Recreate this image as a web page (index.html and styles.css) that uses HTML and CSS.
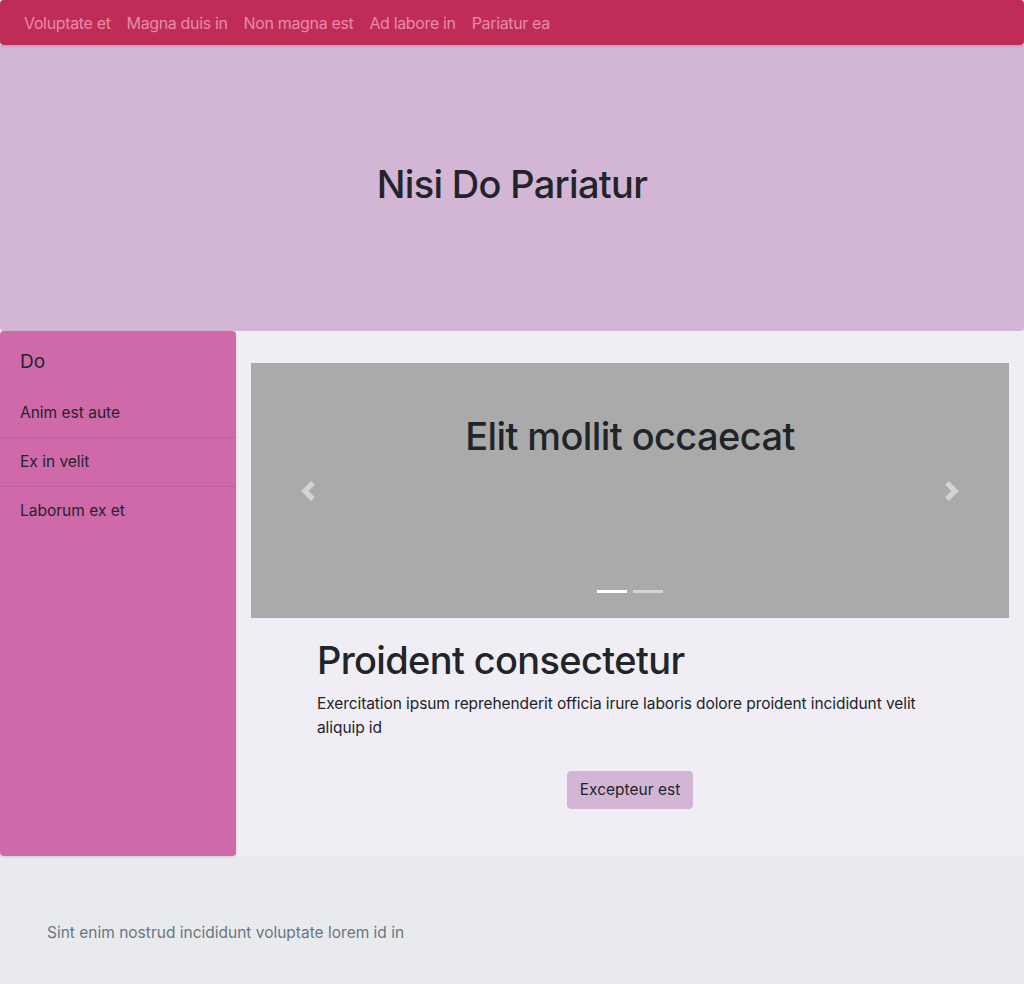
FILE: index.html
```html
<!DOCTYPE html>
<html lang="en">
<head>
<meta charset="utf-8">
<title>Nisi Do Pariatur</title>
<link rel="stylesheet" href="styles.css">
</head>
<body>
<nav class="navbar">
  <a class="nav-link" href="#">Voluptate et</a>
  <a class="nav-link" href="#">Magna duis in</a>
  <a class="nav-link" href="#">Non magna est</a>
  <a class="nav-link" href="#">Ad labore in</a>
  <a class="nav-link" href="#">Pariatur ea</a>
</nav>
<header class="hero">
  <h1 class="hero-title">Nisi Do Pariatur</h1>
</header>
<div class="layout">
  <aside class="sidebar">
    <h5 class="sidebar-title">Do</h5>
    <ul class="side-list">
      <li class="side-item">Anim est aute</li>
      <li class="side-item">Ex in velit</li>
      <li class="side-item">Laborum ex et</li>
    </ul>
  </aside>
  <main class="main">
    <div class="carousel">
      <h2 class="carousel-caption">Elit mollit occaecat</h2>
      <div class="ctrl ctrl-prev">
        <svg width="20" height="20" viewBox="0 0 8 8"><path d="M5.25 0l-4 4 4 4 1.5-1.5L4.25 4l2.5-2.5L5.25 0z" fill="#fff"/></svg>
      </div>
      <div class="ctrl ctrl-next">
        <svg width="20" height="20" viewBox="0 0 8 8"><path d="M2.75 0l-1.5 1.5L3.75 4l-2.5 2.5L2.75 8l4-4-4-4z" fill="#fff"/></svg>
      </div>
      <div class="indicators">
        <span class="ind active"></span>
        <span class="ind"></span>
      </div>
    </div>
    <section class="content">
      <h2 class="content-title">Proident consectetur</h2>
      <p class="content-text">Exercitation ipsum reprehenderit officia irure laboris dolore proident incididunt velit aliquip id</p>
      <div class="btn-row"><button class="btn">Excepteur est</button></div>
    </section>
  </main>
</div>
<footer class="footer">
  <p class="footer-text">Sint enim nostrud incididunt voluptate lorem id in</p>
</footer>
</body>
</html>
```

FILE: styles.css
```css
* { box-sizing: border-box; }
html, body { margin: 0; padding: 0; }
body {
  font-family: Inter, "Noto Sans", "Liberation Sans", sans-serif;
  font-size: 16px;
  line-height: 1.5;
  color: #212529;
  background: #e9eaee;
}
.navbar {
  position: relative;
  z-index: 2;
  display: flex;
  align-items: center;
  height: 45px;
  padding: 0 16px;
  background: #c02c58;
  border-radius: 4px;
  box-shadow: 0 1px 3px rgba(0,0,0,0.15);
}
.nav-link {
  padding: 0 8px;
  color: #e88aa8;
  text-decoration: none;
  font-size: 16px;
  letter-spacing: -0.35px;
}
.hero {
  height: 286px;
  padding-bottom: 6px;
  background: #d3b5d6;
  display: flex;
  align-items: center;
  justify-content: center;
  border-radius: 0 0 4px 4px;
}
.hero-title {
  margin: 0;
  font-size: 38px;
  font-weight: 500;
  line-height: 1.2;
  letter-spacing: -0.7px;
}
.layout {
  display: flex;
  background: #f0edf4;
}
.sidebar {
  flex: 0 0 236px;
  background: #d069a9;
  border-radius: 4px;
  box-shadow: 0 1px 3px rgba(0,0,0,0.15);
  padding-top: 19px;
}
.sidebar-title {
  margin: 0 0 15px;
  padding: 0 20px;
  font-size: 19px;
  font-weight: 400;
  line-height: 24px;
}
.side-list {
  list-style: none;
  margin: 0;
  padding: 0;
}
.side-item {
  padding: 12px 20px;
  border-bottom: 1px solid #c35d9c;
  font-size: 15.5px;
  line-height: 24px;
}
.side-item:last-child { border-bottom: 0; }
.main {
  flex: 1;
  padding: 32px 15px 47px;
}
.carousel {
  position: relative;
  height: 255px;
  background: #aaaaaa;
  padding-top: 49px;
}
.carousel-caption {
  margin: 0;
  text-align: center;
  font-size: 38px;
  font-weight: 500;
  line-height: 48px;
  letter-spacing: -0.6px;
}
.ctrl {
  position: absolute;
  top: 0;
  bottom: 0;
  width: 15%;
  display: flex;
  align-items: center;
  justify-content: center;
  opacity: 0.5;
}
.ctrl-prev { left: 0; }
.ctrl-next { right: 0; }
.indicators {
  position: absolute;
  left: 0;
  right: 0;
  bottom: 25px;
  display: flex;
  justify-content: center;
  gap: 6px;
}
.ind {
  width: 30px;
  height: 3px;
  background: #fff;
  opacity: 0.5;
}
.ind.active { opacity: 1; }
.content {
  padding: 20px 66px 0;
}
.content-title {
  margin: 0 0 8px;
  font-size: 38px;
  font-weight: 500;
  line-height: 1.2;
  letter-spacing: -0.65px;
}
.content-text {
  margin: 0 0 16px;
  font-size: 15.5px;
  line-height: 24px;
  letter-spacing: -0.08px;
}
.btn-row {
  display: flex;
  justify-content: center;
  padding-top: 15px;
}
.btn {
  font-family: inherit;
  font-size: 15.5px;
  line-height: 24px;
  color: #212529;
  background: #d3b5d6;
  border: 1px solid #d3b5d6;
  border-radius: 4px;
  padding: 6px 12px;
}
.footer {
  padding: 65px 47px 39px;
}
.footer-text {
  margin: 0;
  color: #6c757d;
  font-size: 15.5px;
  line-height: 24px;
}
```
